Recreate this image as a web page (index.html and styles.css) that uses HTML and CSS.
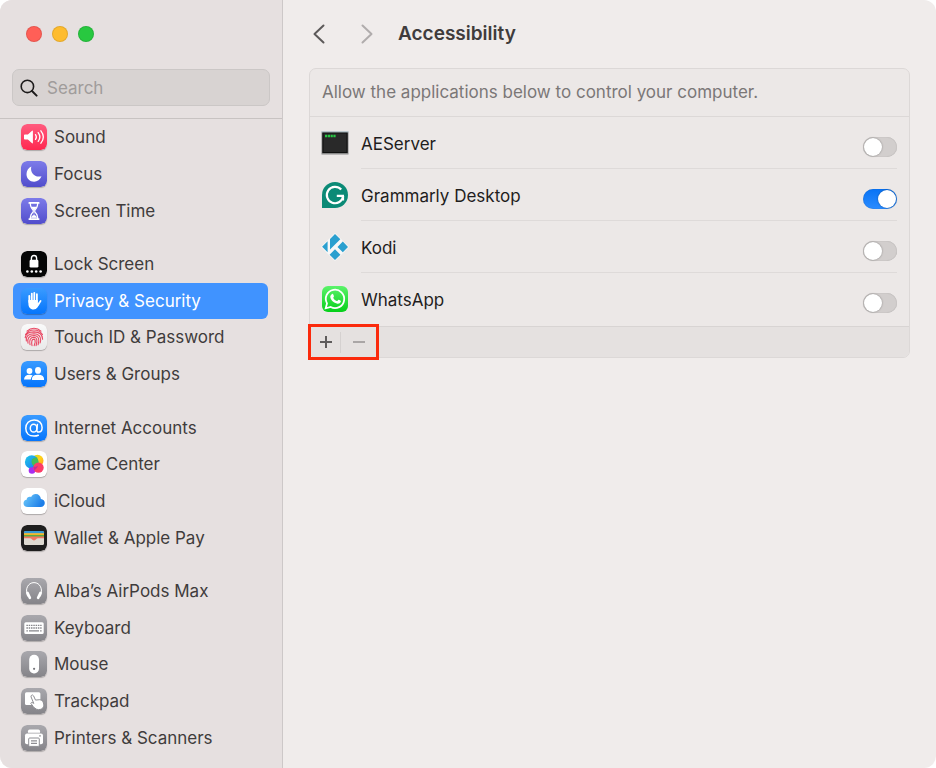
FILE: index.html
```html
<!DOCTYPE html>
<html lang="en">
<head>
<meta charset="utf-8">
<title>Accessibility</title>
<link rel="stylesheet" href="styles.css">
</head>
<body>
<div class="window">
  <aside class="sidebar">
    <div class="lights">
      <button class="light light-close" type="button" aria-label="Close"></button>
      <button class="light light-min" type="button" aria-label="Minimize"></button>
      <button class="light light-zoom" type="button" aria-label="Zoom"></button>
    </div>
    <div class="search">
      <svg class="search-icon" viewBox="0 0 18 18" aria-hidden="true"><circle cx="7.4" cy="7.4" r="6.2" fill="none" stroke="#1d1b1b" stroke-width="1.6"/><path d="M12 12l4.6 4.6" stroke="#1d1b1b" stroke-width="2" stroke-linecap="round"/></svg>
      <input class="search-input" type="search" placeholder="Search" aria-label="Search">
    </div>
    <nav class="nav" aria-label="Settings">
      <div class="group">
        <a class="item" href="#sound"><svg class="icon" viewBox="0 0 26 26" aria-hidden="true"><defs><linearGradient id="pink" x2="0" y2="1"><stop stop-color="#ff5c7f"/><stop offset="1" stop-color="#ff2850"/></linearGradient></defs><rect width="26" height="26" rx="6" fill="url(#pink)"/><path d="M3.8 10.4h3.1l3.9-3.5q1.1-.8 1.1.4v11.4q0 1.200-1.1.4l-3.900-3.500h-3.100q-.8 0-.8-.8v-3.600q0-.8.8-.8z" fill="#fff"/><path d="M14.500 10.600q1.700 2.400 0 4.800M17.200 8.600q3.300 4.400 0 8.800M19.900 6.800q4.900 6.200 0 12.400" fill="none" stroke="#fff" stroke-width="1.300" stroke-linecap="round"/></svg><span>Sound</span></a>
        <a class="item" href="#focus"><svg class="icon" viewBox="0 0 26 26" aria-hidden="true"><defs><linearGradient id="indigo" x2="0" y2="1"><stop stop-color="#7d7be9"/><stop offset="1" stop-color="#514dcc"/></linearGradient></defs><rect width="26" height="26" rx="6" fill="url(#indigo)"/><path d="M10.300 5.400c-1.500 6 3.300 11.600 10.200 9.900-1.300 3.400-4.200 5.400-7.400 5.400-4.300 0-7.600-3.300-7.600-7.500 0-3.500 1.900-6.500 4.800-7.800z" fill="#fff"/></svg><span>Focus</span></a>
        <a class="item" href="#screen-time"><svg class="icon" viewBox="0 0 26 26" aria-hidden="true"><rect width="26" height="26" rx="6" fill="url(#indigo)"/><path d="M8.300 4.900h9.400M8.300 21.100h9.400" stroke="#fff" stroke-width="1.800" stroke-linecap="round"/><path d="M9.300 5c0 4.500 1 5.500 2.900 7v2c-1.900 1.500-2.900 2.500-2.900 7M16.700 5c0 4.500-1 5.500-2.900 7v2c1.900 1.500 2.900 2.500 2.900 7" fill="none" stroke="#fff" stroke-width="1.300"/><path d="M10.300 9h5.400l-2.700 3.200zM13 14.500v3M10.200 19.800q.5-2 2.800-2.800 2.300.8 2.800 2.800z" fill="#fff" stroke="#fff" stroke-width=".5"/></svg><span>Screen Time</span></a>
      </div>
      <div class="group">
        <a class="item" href="#lock-screen"><svg class="icon" viewBox="0 0 26 26" aria-hidden="true"><rect width="26" height="26" rx="6" fill="#050505"/><rect x="8.600" y="8.800" width="8.800" height="7.700" rx="1.300" fill="#fff"/><path d="M10.400 9.500V7.200q0-2.700 2.600-2.700t2.600 2.700v2.300" fill="none" stroke="#fff" stroke-width="1.400"/><g fill="#fff"><circle cx="6.400" cy="20.500" r="1.300"/><circle cx="10.800" cy="20.500" r="1.300"/><circle cx="15.200" cy="20.500" r="1.300"/><circle cx="19.600" cy="20.500" r="1.300"/></g></svg><span>Lock Screen</span></a>
        <a class="item item-selected" href="#privacy" aria-current="page"><svg class="icon" viewBox="0 0 26 26" aria-hidden="true"><defs><linearGradient id="blue" x2="0" y2="1"><stop stop-color="#3a9bff"/><stop offset="1" stop-color="#0575fc"/></linearGradient></defs><rect width="26" height="26" rx="6" fill="url(#blue)"/><g fill="none" stroke="#fff" stroke-width="1.800" stroke-linecap="round"><path d="M8.300 8v6M10.800 5.600V13M13.300 4.800V13M15.900 6.200V14M19.600 12.900l-2.400 4"/></g><path d="M7.400 12h9.400v3l1.700-.8c-.8 4.400-2.800 7.200-5.800 7.200-3.600 0-5.300-2.400-5.300-6z" fill="#fff"/></svg><span>Privacy &amp; Security</span></a>
        <a class="item" href="#touch-id"><svg class="icon" viewBox="0 0 26 26" aria-hidden="true"><defs><linearGradient id="pale" x2="0" y2="1"><stop stop-color="#fafafa"/><stop offset="1" stop-color="#e9e9e9"/></linearGradient></defs><rect width="26" height="26" rx="6" fill="url(#pale)"/><g fill="none" stroke="#e94863" stroke-width="1.100" stroke-linecap="round"><path d="M6 7.200Q9 4.300 13 4.300t7 2.900M4.500 10.500Q7.500 6 13 6t8.500 4.500M4.200 13.600Q5 7.900 13 7.900q8.500.3 8.600 7.400M5.300 17Q4.400 9.700 13 9.700q6.800.3 6.700 6.600l-.6 2.700M7 19.200q-1.300-7.700 6-7.700 5 .3 4.800 5.500l-.7 3.800M9 20.700q-1.500-7.400 4-7.400 3.200.3 2.900 4.400l-.8 3.900M11 21.600q-1.200-6.500 2-6.500 1.400.2 1.100 3.300l-.9 3.300"/></g></svg><span>Touch ID &amp; Password</span></a>
        <a class="item" href="#users"><svg class="icon" viewBox="0 0 26 26" aria-hidden="true"><rect width="26" height="26" rx="6" fill="url(#blue)"/><g fill="#fff"><circle cx="8.500" cy="10" r="2.900"/><path d="M3 18.500q.3-4.700 5.500-4.700 2 0 3.200.8-1.700 1.500-1.900 3.900z"/><ellipse cx="17" cy="9.400" rx="3" ry="3.400"/><path d="M10.900 19q-.5-5.300 6.100-5.300 6.500 0 6.100 5.300z"/></g></svg><span>Users &amp; Groups</span></a>
      </div>
      <div class="group">
        <a class="item" href="#internet"><svg class="icon" viewBox="0 0 26 26" aria-hidden="true"><rect width="26" height="26" rx="6" fill="url(#blue)"/><g fill="none" stroke="#fff" stroke-width="1.500" stroke-linecap="round"><ellipse cx="12.600" cy="13.200" rx="3.300" ry="3.900"/><path d="M16.400 9.400l-.6 5.400q-.2 2.300 1.900 2.300c2 0 3.400-2 3.400-4.600 0-4.400-3.200-7.500-7.900-7.500-5 0-8.400 3.400-8.400 8.200 0 4.900 3.200 7.900 8.300 7.900q2.500 0 4.200-.8"/></g></svg><span>Internet Accounts</span></a>
        <a class="item" href="#game-center"><svg class="icon" viewBox="0 0 26 26" aria-hidden="true"><defs><linearGradient id="gy" x2="1" y2="1"><stop stop-color="#c9dc18"/><stop offset=".5" stop-color="#ffd21a"/><stop offset="1" stop-color="#ff9518"/></linearGradient><linearGradient id="gb" x2="1" y2="1"><stop stop-color="#20c9e8"/><stop offset="1" stop-color="#1976f2"/></linearGradient></defs><rect width="26" height="26" rx="6" fill="#fff"/><circle cx="16.500" cy="9.700" r="6" fill="url(#gy)"/><circle cx="10.700" cy="11" r="6.800" fill="url(#gb)"/><path d="M10.800 8.500a6 6 0 0 1 4.900-2 6.800 6.800 0 0 1-.8 9.700 6 6 0 0 1-4.100-7.700z" fill="#45bb58"/><circle cx="11" cy="19.500" r="3.300" fill="#a72df0"/><circle cx="17.500" cy="16.600" r="5.200" fill="#fc3d68"/><path d="M12.500 15.500q2 1.300 4.600-1-1 3.400-3.700 5z" fill="#c22e91"/></svg><span>Game Center</span></a>
        <a class="item" href="#icloud"><svg class="icon" viewBox="0 0 26 26" aria-hidden="true"><defs><linearGradient id="cloud" x2="1" y2=".4"><stop stop-color="#71cdfb"/><stop offset="1" stop-color="#1d7ee8"/></linearGradient></defs><rect width="26" height="26" rx="6" fill="#fff"/><path d="M6.800 19C4 19 2.500 17.500 2.500 15.300c0-2 1.300-3.300 3.100-3.500.1-2.200 2.400-3.700 4.500-2.700C11 7 12.700 6 14.700 6c3 0 4.900 2 5.200 5 2.400.3 3.900 1.900 3.900 4.100 0 2.400-1.600 3.900-4.200 3.900z" fill="url(#cloud)"/></svg><span>iCloud</span></a>
        <a class="item" href="#wallet"><svg class="icon" viewBox="0 0 26 26" aria-hidden="true"><rect width="26" height="26" rx="6" fill="#1e1e1e"/><rect x="3" y="6" width="20" height="14" rx="1.500" fill="#dedad2"/><path d="M3 8.500V7.500Q3 6 4.500 6h17Q23 6 23 7.500v1z" fill="#3598d4"/><path d="M3 8.300h20v2H3z" fill="#f3b624"/><path d="M3 10.100h20V12H3z" fill="#5daa43"/><path d="M3 11.600h20v1.700h-6c-1.700 0-2 2.200-4 2.200s-2.300-2.200-4-2.200H3z" fill="#f17663"/></svg><span>Wallet &amp; Apple Pay</span></a>
      </div>
      <div class="group">
        <a class="item" href="#airpods"><svg class="icon" viewBox="0 0 26 26" aria-hidden="true"><defs><linearGradient id="gray" x2="0" y2="1"><stop stop-color="#a9a8ad"/><stop offset="1" stop-color="#858489"/></linearGradient></defs><rect width="26" height="26" rx="6" fill="url(#gray)"/><path d="M6.700 18.500C3.600 11 7 4.600 13 4.600s9.400 6.400 6.300 13.900" fill="none" stroke="#fff" stroke-width="1"/><path d="M6.500 14.900l2.400 5M19.500 14.900l-2.400 5" stroke="#fff" stroke-width="2.600" stroke-linecap="round"/></svg><span>Alba’s AirPods Max</span></a>
        <a class="item" href="#keyboard"><svg class="icon" viewBox="0 0 26 26" aria-hidden="true"><rect width="26" height="26" rx="6" fill="url(#gray)"/><rect x="3.300" y="7.200" width="19.400" height="11.800" rx="1.600" fill="#fff"/><path d="M5.400 10.400h15.200M5.400 13h15.200" stroke="#85858a" stroke-width="1.400" stroke-dasharray="1.500 .8"/><path d="M5.400 15.900h1.500M8 15.900h10M19.100 15.900h1.500" stroke="#85858a" stroke-width="1.400"/></svg><span>Keyboard</span></a>
        <a class="item" href="#mouse"><svg class="icon" viewBox="0 0 26 26" aria-hidden="true"><rect width="26" height="26" rx="6" fill="url(#gray)"/><rect x="8.200" y="3.800" width="9.800" height="18.700" rx="4.700" fill="#fff"/><circle cx="13.100" cy="17.800" r="1.100" fill="#77777c"/></svg><span>Mouse</span></a>
        <a class="item" href="#trackpad"><svg class="icon" viewBox="0 0 26 26" aria-hidden="true"><rect width="26" height="26" rx="6" fill="url(#gray)"/><rect x="4" y="4.300" width="15.400" height="12.700" rx="1.500" fill="#fff"/><path d="M10.400 7.400q1.400-1.100 2.200.5l1.900 4.200 4.300-.4q2 .1 2.900 1.700c2.200 3.800.8 6.900-2.100 7.900-3 1-5.500-.3-7.500-2.900l-2.300-3.100q.2-1.500 2.300-.4l.7.600-2.700-6.500q-.3-1 .3-1.600z" fill="#fff" stroke="#8e8e93" stroke-width="1"/></svg><span>Trackpad</span></a>
        <a class="item" href="#printers"><svg class="icon" viewBox="0 0 26 26" aria-hidden="true"><rect width="26" height="26" rx="6" fill="url(#gray)"/><path d="M7 7.800V6.200Q7 4.600 8.600 4.600h8.800q1.600 0 1.600 1.600v1.600z" fill="#fff"/><rect x="4" y="8.600" width="18" height="10.600" rx="2" fill="#fff"/><rect x="7.700" y="13" width="10.600" height="8.400" rx="1" fill="#fff" stroke="#8e8e93"/><path d="M10 15.900h6M10 18.400h6" stroke="#8e8e93" stroke-width="1.100"/><circle cx="19" cy="10.900" r=".8" fill="#8e8e93"/></svg><span>Printers &amp; Scanners</span></a>
      </div>
    </nav>
  </aside>
  <main class="main">
    <header class="toolbar">
      <button class="arrow" type="button" aria-label="Back"><svg viewBox="0 0 12 20" aria-hidden="true"><path d="M10.500 1.500L1.500 10l9 8.500"/></svg></button>
      <button class="arrow arrow-off" type="button" aria-label="Forward"><svg viewBox="0 0 12 20" aria-hidden="true"><path d="M1.500 1.500l9 8.500-9 8.500"/></svg></button>
      <h1 class="title">Accessibility</h1>
    </header>
    <section class="card">
      <p class="lead">Allow the applications below to control your computer.</p>
      <ul class="apps">
        <li class="app">
          <svg class="app-icon" viewBox="0 0 28 28" aria-hidden="true"><path d="M.5 2.500h27v23h-27z" fill="#888"/><path d="M.5 2.500h27v1h-27z" fill="#b9d3dc"/><path d="M1.300 3.500h25.400V24H1.300z" fill="#111"/><path d="M2.500 4.500h23V23h-23z" fill="#292929"/><path d="M4 7h11" stroke="#28c845" stroke-width="2.600" stroke-dasharray="2.200 .6"/></svg>
          <div class="app-body"><label class="app-name" for="ae">AEServer</label><input class="switch" type="checkbox" role="switch" id="ae"></div>
        </li>
        <li class="app">
          <svg class="app-icon" viewBox="0 0 28 28" aria-hidden="true"><path d="M1 27V14A13 13 0 1 1 14 27z" fill="#0b8a76"/><path d="M20.200 8.600A8.200 8.200 0 1 0 22.200 14.900M15.800 14.900h7.200M22 14.900v4.600" fill="none" stroke="#fff" stroke-width="2.200"/></svg>
          <div class="app-body"><label class="app-name" for="gr">Grammarly Desktop</label><input class="switch" type="checkbox" role="switch" id="gr" checked></div>
        </li>
        <li class="app">
          <svg class="app-icon" viewBox="0 0 28 28" aria-hidden="true"><path d="M14 0l14 14-14 14L0 14z" fill="#f7f7f7"/><g fill="#2a9fcf"><path d="M14 .9l5.300 5.300-10.300 10.300V5.900zM6.600 8.300v11L1.100 13.800zM21.800 8.600l5.200 5.400-5.200 5.200-5.300-5.200zM14 16.300l5.400 5.400-5.400 5.400-5.400-5.400z"/></g></svg>
          <div class="app-body"><label class="app-name" for="ko">Kodi</label><input class="switch" type="checkbox" role="switch" id="ko"></div>
        </li>
        <li class="app">
          <svg class="app-icon" viewBox="0 0 28 28" aria-hidden="true"><defs><linearGradient id="wa" x2="0" y2="1"><stop stop-color="#5cf36b"/><stop offset="1" stop-color="#05cf19"/></linearGradient></defs><rect x="1" y="1" width="26" height="26" rx="6" fill="url(#wa)"/><path d="M4.700 23.300l1.300-4.900A9.200 9.200 0 1 1 9.700 22z" fill="none" stroke="#fff" stroke-width="1.800"/><path d="M10.700 9.200c.9-.8 1.500-.2 2.200 1.800.3.900-.9 1.500-.6 2 .8 1.500 2 2.500 3.500 3.100.7.200 1.200-1.600 2-1.300 1.900.8 2.300 1.100 2 2-.5 1.700-2.300 2.300-4 1.800-3.600-1-6.200-3.700-6.500-6.500-.1-1.100.5-2.100 1.400-2.900z" fill="#fff"/></svg>
          <div class="app-body"><label class="app-name" for="wh">WhatsApp</label><input class="switch" type="checkbox" role="switch" id="wh"></div>
        </li>
      </ul>
      <footer class="card-foot">
        <div class="edit">
          <button class="edit-btn" type="button" aria-label="Add"><svg viewBox="0 0 12 12" aria-hidden="true"><path d="M0 6h12M6 0v12"/></svg></button>
          <button class="edit-btn edit-off" type="button" aria-label="Remove"><svg viewBox="0 0 12 12" aria-hidden="true"><path d="M0 6h12"/></svg></button>
        </div>
      </footer>
    </section>
  </main>
</div>
</body>
</html>
```
FILE: styles.css
```css
* { box-sizing: border-box; }
body {
  margin: 0;
  background: #fff;
  color: #3f3c3c;
  font: 17px/20px Inter, "Liberation Sans", sans-serif;
}
button { padding: 0; border: 0; background: none; }
.window {
  display: grid;
  grid-template-columns: 283px 1fr;
  min-height: 100vh;
  overflow: hidden;
  border-radius: 12px;
  background: #f0eceb;
}
.sidebar {
  display: flex;
  flex-direction: column;
  border-right: 1px solid #cdc8c8;
  background: #e6e0e0;
}
.lights { display: flex; gap: 10px; padding: 26px 26px 27px; }
.light { width: 16px; height: 16px; border-radius: 50%; border: 1px solid #0000001a; }
.light-close { background: #ff5f57; }
.light-min { background: #febc2e; }
.light-zoom { background: #28c840; }
.search {
  display: flex;
  align-items: center;
  gap: 9px;
  height: 37px;
  margin: 0 12px 12px;
  padding: 0 7px;
  border: 1px solid #cbc7c6;
  border-radius: 7px;
  background: #d8d3d2;
}
.search-icon { width: 18px; height: 18px; flex: none; }
.search-input {
  flex: 1;
  min-width: 0;
  padding: 0;
  border: 0;
  outline: 0;
  background: none;
  font: inherit;
}
.search-input::placeholder { color: #a09c9b; }
.nav {
  display: flex;
  flex: 1;
  flex-direction: column;
  gap: 17px;
  padding: 0 14px 12px 13px;
  border-top: 1px solid #c8c3c2;
}
.group { display: flex; flex-direction: column; flex: 4 0 auto; }
.group:first-child { flex-grow: 3; }
.group:last-child { flex-grow: 5; }
.item {
  display: flex;
  flex: 1;
  align-items: center;
  gap: 7px;
  min-height: 36px;
  padding: 0 8px;
  border-radius: 6px;
  color: inherit;
  text-decoration: none;
  white-space: nowrap;
}
.item-selected { background: #4093ff; color: #fff; }
.icon { width: 26px; height: 26px; flex: none; border-radius: 6px; box-shadow: 0 1px 1px #00000040; }
.main { min-width: 0; padding: 0 26px; }
.toolbar { display: flex; align-items: center; height: 68px; padding: 0 4px; }
.arrow { display: flex; width: 12px; height: 20px; margin-right: 36px; }
.arrow svg { width: 12px; height: 20px; fill: none; stroke: #5c5959; stroke-width: 2; stroke-linecap: round; stroke-linejoin: round; }
.arrow-off { margin-right: 25px; }
.arrow-off svg { stroke: #b0acac; }
.title { margin: 0; font-size: 19px; line-height: 24px; font-weight: 600; }
.card { border: 1px solid #dcd8d7; border-radius: 7px; background: #ece8e7; }
.lead { margin: 0; padding: 13px 12px 14px; border-bottom: 1px solid #dcd8d7; color: #7b7777; }
.apps { margin: 0; padding: 0; list-style: none; }
.app { display: flex; gap: 12px; height: 52px; padding: 0 12px 0 11px; color: #1f1d1d; }
.app:last-child { height: 53px; }
.app-icon { width: 28px; height: 28px; flex: none; margin-top: 12px; }
.app-body { display: flex; flex: 1; align-items: flex-start; border-bottom: 1px solid #dedad9; }
.app:last-child .app-body { border: 0; }
.app-name { flex: 1; padding-top: 17px; }
.switch {
  appearance: none;
  width: 34px;
  height: 20px;
  margin: 20px 0 0;
  padding: 1px;
  border-radius: 10px;
  background: #d2cecd;
  box-shadow: inset 0 0 1px #0000004d;
}
.switch::before {
  content: "";
  display: block;
  width: 18px;
  height: 18px;
  border-radius: 50%;
  background: #fff;
  box-shadow: 0 0 2px #00000066;
}
.switch:checked { background: linear-gradient(#0873f5, #2b8cff); }
.switch:checked::before { margin-left: auto; }
.card-foot { display: flex; height: 31px; border-top: 1px solid #d8d4d3; border-radius: 0 0 6px 6px; background: #e5e1e0; }
.edit { display: flex; align-items: center; width: 65px; margin-left: 1px; outline: 3px solid #fb2a0c; }
.edit-btn { display: flex; width: 29px; align-items: center; justify-content: center; height: 21px; }
.edit-btn svg { width: 12px; height: 12px; stroke: #5f5c5c; stroke-width: 2; }
.edit-off { flex: 1; border-left: 1px solid #d5d1d0; }
.edit-off svg { stroke: #aaa6a6; }
```
